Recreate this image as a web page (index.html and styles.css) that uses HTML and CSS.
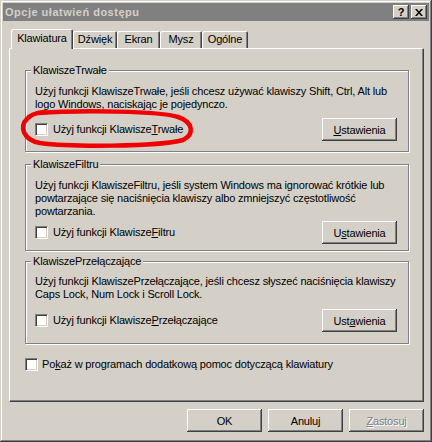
FILE: index.html
```html
<!DOCTYPE html>
<html lang="pl">
<head>
<meta charset="utf-8">
<title>Opcje ułatwień dostępu</title>
<link rel="stylesheet" href="styles.css">
</head>
<body>
<div class="window">
  <div class="titlebar">
    <span class="title">Opcje ułatwień dostępu</span>
    <div class="caption-btns">
      <span class="cbtn help">?</span>
      <span class="cbtn close"><svg width="8" height="7" viewBox="0 0 8 7"><path d="M0 0h2l2 2.5L6 0h2L5 3.5 8 7H6L4 4.5 2 7H0l3-3.5z" fill="#000"/></svg></span>
    </div>
  </div>
  <div class="client">
    <div class="tabs">
      <div class="tab active t1">Klawiatura</div>
      <div class="tab t2">Dźwięk</div>
      <div class="tab t3">Ekran</div>
      <div class="tab t4">Mysz</div>
      <div class="tab t5">Ogólne</div>
    </div>
    <div class="panel">
      <fieldset class="group g1">
        <legend>KlawiszeTrwałe</legend>
        <p class="desc">Użyj funkcji KlawiszeTrwałe, jeśli chcesz używać klawiszy Shift, Ctrl, Alt lub logo Windows, naciskając je pojedynczo.</p>
        <div class="row">
          <label class="check"><span class="box"></span><span>Użyj funkcji Klawisze<u>T</u>rwałe</span></label>
          <button class="btn"><u>U</u>stawienia</button>
        </div>
      </fieldset>
      <fieldset class="group g2">
        <legend>KlawiszeFiltru</legend>
        <p class="desc">Użyj funkcji KlawiszeFiltru, jeśli system Windows ma ignorować krótkie lub powtarzające się naciśnięcia klawiszy albo zmniejszyć częstotliwość powtarzania.</p>
        <div class="row">
          <label class="check"><span class="box"></span><span>Użyj funkcji Klawisze<u>F</u>iltru</span></label>
          <button class="btn">U<u>s</u>tawienia</button>
        </div>
      </fieldset>
      <fieldset class="group g3">
        <legend>KlawiszePrzełączające</legend>
        <p class="desc">Użyj funkcji KlawiszePrzełączające, jeśli chcesz słyszeć naciśnięcia klawiszy Caps Lock, Num Lock i Scroll Lock.</p>
        <div class="row">
          <label class="check"><span class="box"></span><span>Użyj funkcji Klawisze<u>P</u>rzełączające</span></label>
          <button class="btn">Ust<u>a</u>wienia</button>
        </div>
      </fieldset>
      <label class="check extra"><span class="box"></span><span>Po<u>k</u>aż w programach dodatkową pomoc dotyczącą klawiatury</span></label>
    </div>
    <div class="buttons">
      <button class="btn">OK</button>
      <button class="btn">Anuluj</button>
      <button class="btn disabled"><u>Z</u>astosuj</button>
    </div>
  </div>
  <svg class="annot" width="432" height="442" viewBox="0 0 432 442">
    <path d="M38 113 C80 110 160 111 178 117 C193 122 195 134 183 140 C156 147 70 147 40 143 C23 140 19 126 27 119 C30 115 34 113 44 112" fill="none" stroke="#f00000" stroke-width="4.5" stroke-linecap="round"/>
  </svg>
</div>
</body>
</html>
```

FILE: styles.css
```css
* { box-sizing: border-box; }
html, body { margin: 0; padding: 0; }
body {
  background: #d4d0c8;
  font-family: "Liberation Sans", Arial, sans-serif;
  font-size: 11px;
  letter-spacing: -0.17px;
  color: #000;
}
.window {
  position: relative;
  width: 432px;
  height: 442px;
  padding: 3px;
  background: #d4d0c8;
  box-shadow: inset -1px -1px 0 #404040, inset 1px 1px 0 #d4d0c8, inset -2px -2px 0 #808080, inset 2px 2px 0 #fff;
}
.titlebar {
  height: 18px;
  background: #808080;
  display: flex;
  align-items: center;
  justify-content: space-between;
  padding-left: 2px;
  padding-right: 2px;
}
.title {
  font-weight: bold;
  color: #d4d0c8;
  letter-spacing: 0.5px;
}
.caption-btns { display: flex; gap: 2px; }
.cbtn {
  width: 16px;
  height: 14px;
  background: #d4d0c8;
  box-shadow: inset -1px -1px 0 #404040, inset 1px 1px 0 #fff, inset -2px -2px 0 #808080;
  display: flex;
  align-items: center;
  justify-content: center;
  font-weight: bold;
  font-size: 11px;
  line-height: 1;
  letter-spacing: 0;
}
.client {
  padding: 8px 5px 0 6px;
}
.tabs {
  display: flex;
  align-items: flex-end;
  padding-left: 2px;
  height: 19px;
  position: relative;
  z-index: 1;
}
.tab {
  height: 17px;
  padding-top: 2px;
  text-align: center;
  background: #d4d0c8;
  box-shadow: inset 1px 1px 0 #fff, inset -1px 0 0 #404040, inset -2px 0 0 #808080;
  border-top-left-radius: 2px;
  border-top-right-radius: 2px;
  white-space: nowrap;
}
.tab.active {
  height: 20px;
  margin-bottom: -1px;
  padding-top: 3px;
}
.t1 { width: 62px; }
.t2 { width: 44px; }
.t3 { width: 43px; }
.t4 { width: 42px; }
.t5 { width: 46px; }
.panel {
  height: 354px;
  border-top: 1px solid #fff;
  border-left: 1px solid #fff;
  border-right: 1px solid #404040;
  border-bottom: 1px solid #404040;
  box-shadow: inset -1px -1px 0 #808080;
  padding: 15px 13px 0 15px;
}
.group {
  margin: 0;
  min-inline-size: 0;
  width: 384px;
  border: 1px solid #808080;
  box-shadow: 1px 1px 0 #fff, inset 1px 1px 0 #fff;
  padding: 8px 11px 10px 9px;
}
.group legend {
  padding: 0 2px;
  margin-left: -4px;
  line-height: 13px;
  background: #d4d0c8;
}
.desc {
  margin: 0;
  line-height: 13px;
}
.row {
  display: flex;
  align-items: center;
  justify-content: space-between;
  margin-top: 7px;
}
.g2 { margin-top: 6px; padding-bottom: 6px; }
.g2 .row { margin-top: 3px; }
.g3 { margin-top: 4px; padding-top: 7px; padding-bottom: 11px; }
.g3 .row { margin-top: 8px; }
.check {
  display: flex;
  align-items: center;
  gap: 5px;
  line-height: 13px;
}
.box {
  width: 13px;
  height: 13px;
  background: #fff;
  border-top: 1px solid #808080;
  border-left: 1px solid #808080;
  border-right: 1px solid #fff;
  border-bottom: 1px solid #fff;
  box-shadow: inset 1px 1px 0 #404040, inset -1px -1px 0 #d4d0c8;
  flex: none;
}
.extra { margin-top: 14px; gap: 4px; }
.btn {
  width: 75px;
  height: 23px;
  padding: 0;
  border: none;
  background: #d4d0c8;
  font-family: inherit;
  font-size: 11px;
  letter-spacing: inherit;
  color: #000;
  box-shadow: inset -1px -1px 0 #404040, inset 1px 1px 0 #fff, inset -2px -2px 0 #808080, inset 2px 2px 0 #d4d0c8;
}
.btn.disabled {
  color: #808080;
  text-shadow: 1px 1px 0 #fff;
}
.buttons {
  display: flex;
  justify-content: flex-end;
  gap: 6px;
  margin-top: 7px;
}
.annot {
  position: absolute;
  left: 0;
  top: 0;
  pointer-events: none;
}
```
